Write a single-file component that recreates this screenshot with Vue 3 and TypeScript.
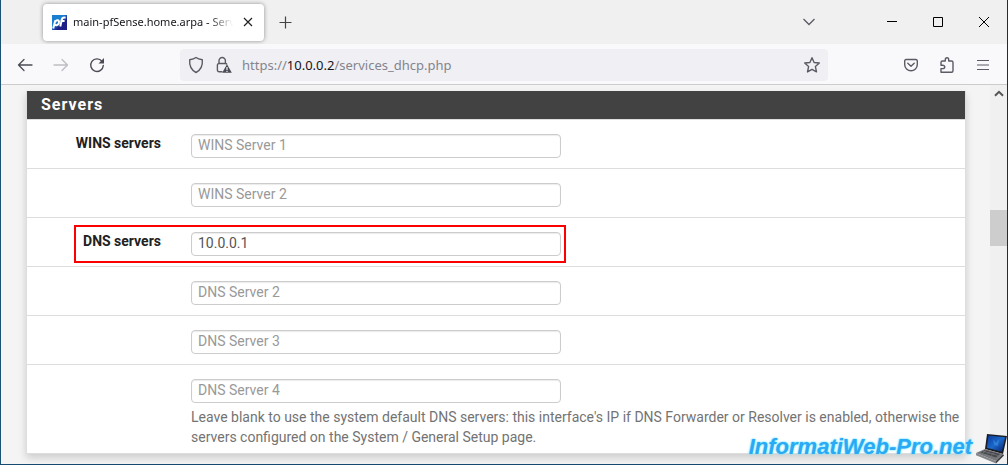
<script setup lang="ts">
import { ref } from 'vue'

interface ServerField {
  id: string
  label: string
  placeholder: string
  value: string
  highlighted?: boolean
  help?: string
}

const fields = ref<ServerField[]>([
  { id: 'wins1', label: 'WINS servers', placeholder: 'WINS Server 1', value: '' },
  { id: 'wins2', label: '', placeholder: 'WINS Server 2', value: '' },
  { id: 'dns1', label: 'DNS servers', placeholder: 'DNS Server 1', value: '10.0.0.1', highlighted: true },
  { id: 'dns2', label: '', placeholder: 'DNS Server 2', value: '' },
  { id: 'dns3', label: '', placeholder: 'DNS Server 3', value: '' },
  {
    id: 'dns4',
    label: '',
    placeholder: 'DNS Server 4',
    value: '',
    help: "Leave blank to use the system default DNS servers: this interface's IP if DNS Forwarder or Resolver is enabled, otherwise the servers configured on the System / General Setup page.",
  },
])
</script>

<template>
  <div class="window">
    <header class="titlebar">
      <div class="tab">
        <svg class="favicon" viewBox="0 0 15 15" aria-hidden="true">
          <defs>
            <linearGradient id="fav" x1="0" y1="0" x2="1" y2="1">
              <stop offset="0.4" stop-color="#1b7fd0" />
              <stop offset="0.65" stop-color="#1e1f86" />
            </linearGradient>
          </defs>
          <rect width="15" height="15" fill="url(#fav)" />
          <path d="M1.200 13.500 3.300 5.500M3.200 6.200C6 4.200 7.600 5.600 6.900 8 6.300 10.200 4.300 10.600 2.700 9.600M8.300 11.500 9.800 4.600C10.200 3 11.400 2.300 13.600 2.700M8.400 6H12.600" fill="none" stroke="#fff" stroke-width="2" />
        </svg>
        <span class="tab-title">main-pfSense.home.arpa - Serv</span>
        <button class="icon-button tab-close" aria-label="Close tab">
          <svg width="10" height="10" viewBox="0 0 10 10"><path d="M1 1l8 8M9 1 1 9" stroke="#222" stroke-width="1.200" /></svg>
        </button>
      </div>
      <button class="icon-button new-tab" aria-label="New tab">
        <svg width="13" height="13" viewBox="0 0 13 13"><path d="M6.500 .5v12M.5 6.500h12" stroke="#444" stroke-width="1.200" /></svg>
      </button>
      <div class="window-controls">
        <button class="icon-button list-tabs" aria-label="List all tabs">
          <svg width="14" height="8" viewBox="0 0 14 8"><path d="M1.500 1 7 6.500 12.500 1" fill="none" stroke="#5b5b66" stroke-width="1.300" /></svg>
        </button>
        <button class="icon-button control" aria-label="Minimize">
          <svg width="10" height="10" viewBox="0 0 10 10"><path d="M0 4.500h10" stroke="#000" /></svg>
        </button>
        <button class="icon-button control" aria-label="Maximize">
          <svg width="10" height="10" viewBox="0 0 10 10"><path d="M.5 .5h9v9h-9z" fill="none" stroke="#000" /></svg>
        </button>
        <button class="icon-button control" aria-label="Close">
          <svg width="10" height="10" viewBox="0 0 10 10"><path d="M0 0l10 10M10 0 0 10" stroke="#000" /></svg>
        </button>
      </div>
    </header>

    <nav class="toolbar" aria-label="Navigation">
      <button class="icon-button nav" aria-label="Back">
        <svg width="16" height="14" viewBox="0 0 16 14"><path d="M7 1.500 1.500 7 7 12.500M1.500 7H15" fill="none" stroke="#4b4b55" stroke-width="1.300" stroke-linejoin="round" stroke-linecap="round" /></svg>
      </button>
      <button class="icon-button nav" aria-label="Forward" disabled>
        <svg width="16" height="14" viewBox="0 0 16 14"><path d="M9 1.500 14.500 7 9 12.500M14.500 7H1" fill="none" stroke="#bdbdc3" stroke-width="1.300" stroke-linejoin="round" stroke-linecap="round" /></svg>
      </button>
      <button class="icon-button nav" aria-label="Reload">
        <svg width="16" height="16" viewBox="0 0 16 16"><path d="M13 4.300A6.300 6.300 0 1 0 14.300 8.500" fill="none" stroke="#4b4b55" stroke-width="1.400" stroke-linecap="round" /><path d="M15 1v5.500H9.500z" fill="#4b4b55" /></svg>
      </button>
      <div class="address">
        <svg width="16" height="18" viewBox="0 0 16 18" aria-hidden="true"><path d="M8 1.500C6 3 3.500 3.500 1.700 3.800 1.200 9.500 3 14 8 16.500 13 14 14.800 9.500 14.300 3.800 12.500 3.500 10 3 8 1.500Z" fill="none" stroke="#5b5b66" stroke-width="1.400" stroke-linejoin="round" /></svg>
        <svg class="lock" width="16" height="18" viewBox="0 0 16 18" aria-hidden="true">
          <path d="M6.500 15.700H3A1.600 1.600 0 0 1 1.400 14.100V9.100A1.600 1.600 0 0 1 3 7.500H9.300A1.600 1.600 0 0 1 10.900 8.500M3 7.500V4.700A3.200 3.200 0 0 1 9.400 4.700V7.500" fill="none" stroke="#5b5b66" stroke-width="1.400" />
          <path d="M11 8.200 15.800 16.800H6.200Z" fill="#4b4b55" />
          <path d="M11 11v3M11 14.800v1.100" stroke="#f0f0f4" stroke-width="1.200" />
        </svg>
        <a class="url" href="#">https://<span class="host">10.0.0.2</span>/services_dhcp.php</a>
        <button class="icon-button star" aria-label="Bookmark this page">
          <svg width="18" height="18" viewBox="0 0 18 18"><path d="M9 1.700 11.100 6.500 16.300 7 12.400 10.600 13.500 15.900 9 13.300 4.500 15.900 5.600 10.600 1.700 7 6.900 6.500Z" fill="none" stroke="#5b5b66" stroke-width="1.400" stroke-linejoin="round" /></svg>
        </button>
      </div>
      <div class="actions">
        <button class="icon-button" aria-label="Save to Pocket">
          <svg width="16" height="16" viewBox="0 0 16 16"><path d="M3 2.500H13A1.500 1.500 0 0 1 14.300 4V7.500A6.300 6.300 0 0 1 1.700 7.500V4A1.500 1.500 0 0 1 3 2.500Z M4.800 6.300 8 9.300 11.200 6.300" fill="none" stroke="#5b5b66" stroke-width="1.400" stroke-linecap="round" stroke-linejoin="round" /></svg>
        </button>
        <button class="icon-button" aria-label="Extensions">
          <svg width="16" height="18" viewBox="0 0 16 18"><path d="M2 16.200V12.600H3.500C6.500 12.600 6.500 9.200 3.500 9.200H2V6.500C2 5.500 2.500 5 3.500 5H6.300V3.700C6.300 1.100 9.700 1.100 9.700 3.700V5H12.500C13.500 5 14 5.500 14 6.500V14.700C14 15.700 13.500 16.200 12.500 16.200Z" fill="none" stroke="#5b5b66" stroke-width="1.400" stroke-linejoin="round" /></svg>
        </button>
        <button class="icon-button" aria-label="Open application menu">
          <svg width="14" height="12" viewBox="0 0 14 12"><path d="M1 1.500h12M1 6h12M1 10.500h12" stroke="#5b5b66" stroke-width="1.200" /></svg>
        </button>
      </div>
    </nav>

    <div class="viewport">
      <main class="page">
        <section class="panel">
          <h2 class="panel-title">Servers</h2>
          <form @submit.prevent>
            <div v-for="field in fields" :key="field.id" class="row">
              <div v-if="field.highlighted" class="highlight"></div>
              <label class="row-label" :for="field.id">{{ field.label }}</label>
              <div class="row-body">
                <input
                  :id="field.id"
                  v-model="field.value"
                  class="text-input"
                  type="text"
                  :placeholder="field.placeholder"
                  :aria-label="field.placeholder"
                />
                <p v-if="field.help" class="help">{{ field.help }}</p>
              </div>
            </div>
          </form>
        </section>
      </main>
      <div class="scrollbar" aria-hidden="true">
        <svg width="10" height="7" viewBox="0 0 10 7"><path d="M1 5.800 5 1.800 9 5.800" fill="none" stroke="#555" stroke-width="2" /></svg>
        <div class="thumb"></div>
      </div>
    </div>

    <div class="watermark">
      <span>InformatiWeb-Pro.net</span>
      <svg width="32" height="30" viewBox="0 0 32 30" aria-hidden="true">
        <defs>
          <linearGradient id="screen" x1="0" y1="0" x2="1" y2="1">
            <stop offset="0" stop-color="#0a3a9c" />
            <stop offset="0.5" stop-color="#1b68c8" />
            <stop offset="1" stop-color="#061f6a" />
          </linearGradient>
        </defs>
        <path d="M11 0 31 2 27 20 9 15Z" fill="#1b1c22" />
        <path d="M12.500 1.500 29.300 3.300 25.800 17.800 10.800 13.800Z" fill="url(#screen)" />
        <path d="M17 5l3 4 3-4-1 7-4-1z" fill="#4aa8ff" opacity=".4" />
        <path d="M9 15 27 20 20 27 0 19Z" fill="#76777b" />
        <path d="M9 16 24 20 20 23.500 4.500 18.500Z" fill="#47484d" />
        <path d="M7 17.200 22 21.500M10 16.500 7 19M14 17.500 11 20.500M18 19 15 21.500" stroke="#8b8c91" stroke-width=".5" />
        <path d="M0 19 20 27V29.500L0 21.300Z" fill="#85868a" />
        <path d="M20 27 27 20 28 21.500 20 29.500Z" fill="#3c3d42" />
      </svg>
    </div>
  </div>
</template>

<style>
html,
body {
  margin: 0;
  background: #f4f4f4;
}
</style>

<style scoped>
.window {
  position: relative;
  display: flex;
  flex-direction: column;
  box-sizing: border-box;
  min-height: 100vh;
  border: 1px solid #1a5274;
  border-top: 0;
  border-right-color: #1a2a5e;
  border-bottom-color: #164a70;
  background: #f0f0f0;
  font-family: Roboto, "Liberation Sans", sans-serif;
  font-size: 14px;
}

.icon-button {
  display: flex;
  align-items: center;
  justify-content: center;
  padding: 0;
  border: 0;
  background: none;
}

.icon-button svg {
  display: block;
}

.titlebar {
  display: flex;
  align-items: center;
  height: 44px;
  padding-left: 42px;
  background: #f0f0f0;
}

.tab {
  display: flex;
  align-items: center;
  box-sizing: border-box;
  width: 221px;
  height: 37px;
  padding: 0 9px;
  border-radius: 4px;
  background: #fff;
  box-shadow: 0 0 4px rgba(0, 0, 0, 0.4);
}

.favicon {
  flex: none;
  width: 15px;
  height: 15px;
  margin-right: 6px;
}

.tab-title {
  flex: 1;
  min-width: 0;
  color: #15141a;
  font: 11px/20px "Noto Sans", "Open Sans", sans-serif;
  white-space: nowrap;
  mask-image: linear-gradient(to left, transparent 8px, #000 32px);
}

.tab-close {
  flex: none;
  width: 14px;
  height: 20px;
}

.new-tab {
  width: 28px;
  height: 28px;
  margin-left: 7px;
}

.window-controls {
  display: flex;
  align-items: center;
  margin-left: auto;
}

.list-tabs {
  width: 30px;
  height: 30px;
  margin-right: 45px;
}

.control {
  width: 46px;
  height: 30px;
}

.toolbar {
  display: flex;
  align-items: center;
  box-sizing: border-box;
  height: 41px;
  padding: 1px 0 0 6px;
  border-bottom: 1px solid #ccc;
  background: #f9f9fb;
}

.nav {
  width: 36px;
  height: 32px;
}

.address {
  display: flex;
  flex: 1;
  align-items: center;
  height: 32px;
  margin-left: 65px;
  padding: 0 7px 0 8px;
  border-radius: 4px;
  background: #f0f0f4;
}

.lock {
  margin-left: 12px;
}

.url {
  flex: 1;
  margin-left: 10px;
  color: #84848c;
  font: 13px/20px "Noto Sans", "Open Sans", sans-serif;
  text-decoration: none;
}

.host {
  color: #15141a;
}

.actions {
  display: flex;
  margin-left: 65px;
  padding-right: 6px;
}

.actions .icon-button {
  width: 36px;
  height: 32px;
}

.viewport {
  display: flex;
  flex: 1;
}

.page {
  flex: 1;
  padding: 6px 24px 10px 25px;
  background: #f4f4f4;
}

.panel {
  border: 1px solid #ddd;
  border-top: 0;
  background: #fff;
  box-shadow: 0 4px 8px rgba(0, 0, 0, 0.16);
}

.panel-title {
  margin: 0;
  padding: 0 14px;
  background: #424242;
  color: #fff;
  font-size: 16px;
  font-weight: 700;
  line-height: 28px;
  letter-spacing: 1px;
}

.row {
  position: relative;
  display: grid;
  grid-template-columns: 134px 1fr;
  column-gap: 30px;
  padding: 13px 4px 10px 0;
  border-top: 1px solid #ddd;
}

.row:last-child {
  padding-bottom: 6px;
}

.row-label {
  color: #212121;
  font-weight: 700;
  line-height: 20px;
  text-align: right;
}

.row-body {
  min-width: 0;
  padding-top: 1px;
}

.text-input {
  display: block;
  box-sizing: border-box;
  width: 48%;
  height: 24px;
  padding: 0 6px 2px;
  border: 1px solid #ccc;
  border-radius: 4px;
  background: #fff;
  box-shadow: inset 0 1px 1px rgba(0, 0, 0, 0.08);
  color: #555;
  font: 14px/20px Roboto, "Liberation Sans", sans-serif;
}

.text-input::placeholder {
  color: #999;
  opacity: 1;
}

.help {
  margin: 4px 0 0;
  color: #737373;
  line-height: 20px;
}

.highlight {
  position: absolute;
  top: 7px;
  left: 47px;
  box-sizing: border-box;
  width: 492px;
  height: 38px;
  border: 2px solid #fa0000;
  pointer-events: none;
}

.scrollbar {
  display: flex;
  flex-direction: column;
  align-items: center;
  width: 17px;
  padding-top: 5px;
  background: #f0f0f0;
}

.thumb {
  width: 17px;
  height: 36px;
  margin-top: 113px;
  background: #cdcdcd;
}

.watermark {
  position: absolute;
  right: -1px;
  bottom: 0;
  display: flex;
  align-items: flex-start;
  gap: 4px;
  color: #2aa9f5;
  font: italic 700 22px/26px "Liberation Sans", Arial, sans-serif;
  text-shadow: 0 0 2px #7fe4ff, 0 0 2px #7fe4ff;
}
</style>
